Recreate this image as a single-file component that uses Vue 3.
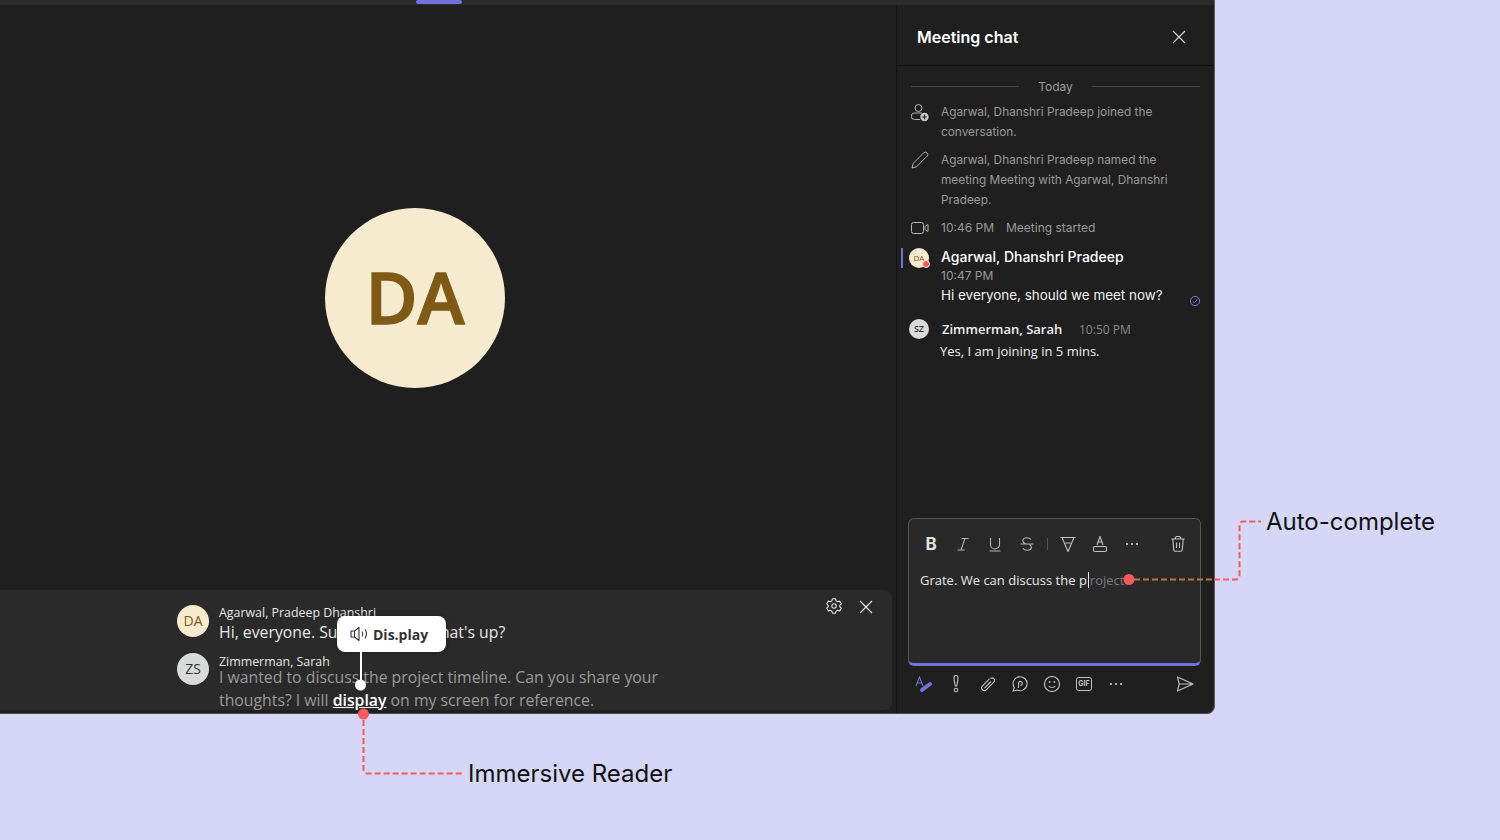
<script setup>
const systemRows = [
  { id: 'join', lines: 'Agarwal, Dhanshri Pradeep joined the conversation.' },
  { id: 'name', lines: 'Agarwal, Dhanshri Pradeep named the meeting Meeting with Agarwal, Dhanshri Pradeep.' },
]
</script>

<template>
  <div class="page">
    <div class="window">
      <div class="topbar"><span class="tab-mark"></span></div>
      <div class="body">
        <main class="stage">
          <div class="stage-center">
            <div class="big-avatar">DA</div>
          </div>
          <section class="captions">
            <div class="cap-list">
              <div class="cap-row">
                <div class="cap-avatar da">DA</div>
                <div class="cap-text">
                  <div class="cap-name">Agarwal, Pradeep Dhanshri</div>
                  <div class="cap-line bright">Hi, everyone. Sure, tell me... what's up?</div>
                </div>
              </div>
              <div class="cap-row second">
                <div class="cap-avatar zs">ZS</div>
                <div class="cap-text">
                  <div class="cap-name tight">Zimmerman, Sarah</div>
                  <div class="cap-line">I wanted to discuss the project timeline. Can you share your<br>thoughts? I will <span class="hot">display</span> on my screen for reference.</div>
                </div>
              </div>
            </div>
            <div class="cap-tools">
              <svg width="18" height="18" viewBox="0 0 20 20" fill="none" stroke="#e6e6e6" stroke-width="1.200" stroke-linejoin="round"><path d="M8.200 2h3.600l.5 2.300 1.700 1 2.300-.7 1.800 3-1.700 1.600v1.600l1.700 1.600-1.800 3-2.300-.7-1.700 1-.5 2.300H8.200l-.5-2.300-1.700-1-2.300.7-1.800-3 1.700-1.600V9.200L1.900 7.600l1.800-3 2.300.7 1.700-1z"/><circle cx="10" cy="10" r="2.500"/></svg>
              <svg width="20" height="20" viewBox="0 0 20 20" fill="none" stroke="#e6e6e6" stroke-width="1.200"><path d="M4 4l12 12M16 4L4 16"/></svg>
            </div>
          </section>
        </main>

        <aside class="chat">
          <header class="chat-head">
            <h1>Meeting chat</h1>
            <svg width="16" height="16" viewBox="0 0 16 16" fill="none" stroke="#d6d6d6" stroke-width="1.100"><path d="M2 2l12 12M14 2L2 14"/></svg>
          </header>

          <div class="chat-list">
            <div class="today"><span></span><b>Today</b><span></span></div>

            <div class="sys">
              <svg class="sys-icon" width="18" height="20" viewBox="0 0 18 20" fill="none" stroke="#b5b5b5" stroke-width="1"><circle cx="7.500" cy="6" r="3.500"/><path d="M11 11H3.500a3.250 3.250 0 0 0 0 6.500H9"/><circle cx="13.500" cy="15" r="4.200" fill="#c8c8c8" stroke="none"/><path d="M13.500 12.800v4.400M11.300 15h4.400" stroke="#1f1f1f" stroke-width="1.100"/></svg>
              <p>{{ systemRows[0].lines }}</p>
            </div>
            <div class="sys">
              <svg class="sys-icon" width="18" height="20" viewBox="0 0 18 20" fill="none" stroke="#b5b5b5" stroke-width="1" stroke-linejoin="round"><path d="M1 18l1.200-4.600L12.700 2.900a2.300 2.300 0 0 1 3.300 3.300L5.500 16.800z"/></svg>
              <p>{{ systemRows[1].lines }}</p>
            </div>
            <div class="sys">
              <svg class="sys-icon" width="18" height="20" viewBox="0 0 18 20" fill="none" stroke="#b5b5b5" stroke-width="1"><rect x="0.500" y="4.500" width="12" height="11" rx="2"/><path d="M14 8.500l3-2v7l-3-2z"/></svg>
              <p class="started"><span>10:46 PM</span><span>Meeting started</span></p>
            </div>

            <div class="msg first">
              <span class="bar"></span>
              <div class="mini-avatar da">DA<i></i></div>
              <div class="msg-main">
                <div class="msg-name">Agarwal, Dhanshri Pradeep</div>
                <div class="msg-time">10:47 PM</div>
                <div class="msg-text">Hi everyone, should we meet now?</div>
              </div>
              <svg class="sent" width="12" height="12" viewBox="0 0 12 12" fill="none" stroke="#7479de" stroke-width="1"><circle cx="6" cy="6" r="4.600"/><path d="M3.800 6.200l1.600 1.500 2.900-3"/></svg>
            </div>

            <div class="msg second">
              <div class="head-row">
                <div class="mini-avatar sz">SZ</div>
                <span class="sz-name">Zimmerman, Sarah</span>
                <span class="sz-time">10:50 PM</span>
              </div>
              <div class="sz-text">Yes, I am joining in 5 mins.</div>
            </div>
          </div>

          <div class="composer">
            <div class="toolbar">
              <span class="tool"><b class="fmt-b">B</b></span>
              <span class="tool"><svg width="16" height="16" viewBox="0 0 16 16" fill="none" stroke="#b5b5b5" stroke-width="1.100"><path d="M6.500 2.500h7M2.500 14h7M10 2.500L6 14"/></svg></span>
              <span class="tool"><svg width="16" height="16" viewBox="0 0 16 16" fill="none" stroke="#b5b5b5" stroke-width="1.100"><path d="M3.500 2v6.500a4.500 4.500 0 0 0 9 0V2M2.500 15h11"/></svg></span>
              <span class="tool"><svg width="16" height="16" viewBox="0 0 16 16" fill="none" stroke="#b5b5b5" stroke-width="1.100"><path d="M12 3.500C11 2 9 1.700 7.500 1.700 5.500 1.700 3.800 3 3.800 4.700c0 1.400 1 2.300 2.500 3M1.500 8h13M10.500 8.500c1.200.7 1.900 1.500 1.900 2.700 0 1.800-2 3-4.200 3-1.800 0-3.500-.6-4.400-2"/></svg></span>
              <span class="tool-sep"></span>
              <span class="tool"><svg width="16" height="16" viewBox="0 0 16 16" fill="none" stroke="#c2c2c2" stroke-width="1.100" stroke-linejoin="round"><path d="M.5 1.500h15M2 1.500L8 15.500l6-14M5.500 7h5"/></svg></span>
              <span class="tool"><svg width="16" height="18" viewBox="0 0 16 18" fill="none" stroke="#c2c2c2" stroke-width="1.100" stroke-linejoin="round"><path d="M5 10l3-8.500L11 10M6 7h4"/><rect x="1.500" y="11.500" width="13" height="5" rx="1.500"/></svg></span>
              <span class="tool"><svg width="14" height="4" viewBox="0 0 14 4" fill="#d0d0d0"><circle cx="2" cy="2" r="1.100"/><circle cx="7" cy="2" r="1.100"/><circle cx="12" cy="2" r="1.100"/></svg></span>
              <span class="tool trash"><svg width="16" height="18" viewBox="0 0 16 18" fill="none" stroke="#c2c2c2" stroke-width="1.100" stroke-linejoin="round"><path d="M1.500 4h13M5.500 4V2.500a1 1 0 0 1 1-1h3a1 1 0 0 1 1 1V4M2.800 4l.9 10.800a1.500 1.500 0 0 0 1.500 1.400h5.600a1.500 1.500 0 0 0 1.500-1.400L13.200 4M6.500 7.500v5.500M9.500 7.500v5.500"/></svg></span>
            </div>
            <div class="typed">Grate. We can discuss the p<span class="caret"></span><span class="ghost">roject</span></div>
          </div>

          <div class="actions">
            <span class="tool"><svg width="20" height="18" viewBox="0 0 20 18" fill="none"><path d="M2 11L5.500 2 9 11M3.300 8h4.400" stroke="#6f74d8" stroke-width="1.100"/><path d="M8 15l8-6" stroke="#6f74d8" stroke-width="4" stroke-linecap="round"/></svg></span>
            <span class="tool"><svg width="10" height="18" viewBox="0 0 10 18" fill="none" stroke="#c2c2c2" stroke-width="1.100"><path d="M3 2.500a2 2 0 0 1 4 0c0 3-.8 6-1.300 8.500H4.300C3.800 8.500 3 5.500 3 2.500z"/><circle cx="5" cy="15" r="1.800"/></svg></span>
            <span class="tool"><svg width="16" height="16" viewBox="0 0 16 16" fill="none" stroke="#c2c2c2" stroke-width="1.100"><path d="M10.500 2.500a2.500 2.500 0 0 1 3.500 3.500L6.500 13.700a2.700 2.700 0 0 1-4-3.900L9.500 2.800M11 5.500l-6.500 6.700"/></svg></span>
            <span class="tool"><svg width="16" height="16" viewBox="0 0 16 16" fill="none" stroke="#c2c2c2" stroke-width="1.100"><path d="M1.200 15l1-3.500A7 7 0 1 1 5 14z"/><path d="M6.500 12V6.800a2 2 0 1 1 1.800 2.600"/></svg></span>
            <span class="tool"><svg width="16" height="16" viewBox="0 0 16 16" fill="none" stroke="#c2c2c2" stroke-width="1.100"><circle cx="8" cy="8" r="7.500"/><path d="M4.800 10c1.500 2 4.900 2 6.400 0"/><circle cx="5.600" cy="6" r=".9" fill="#c2c2c2" stroke="none"/><circle cx="10.400" cy="6" r=".9" fill="#c2c2c2" stroke="none"/></svg></span>
            <span class="tool"><span class="gif">GIF</span></span>
            <span class="tool"><svg width="14" height="4" viewBox="0 0 14 4" fill="#d0d0d0"><circle cx="2" cy="2" r="1.100"/><circle cx="7" cy="2" r="1.100"/><circle cx="12" cy="2" r="1.100"/></svg></span>
            <span class="tool send"><svg width="18" height="16" viewBox="0 0 18 16" fill="none" stroke="#c2c2c2" stroke-width="1.100" stroke-linejoin="round"><path d="M1.500 1l15.500 7L1.500 15l1.700-7zM3.200 8H17"/></svg></span>
          </div>
        </aside>
      </div>
    </div>

    <div class="bubble">
      <svg width="20" height="16" viewBox="0 0 20 16" fill="none" stroke="#333" stroke-width="1.100" stroke-linejoin="round"><path d="M1 5h3.500L9 1.500v13L4.500 11H1zM4.500 5v6"/><path d="M12 5.500c1 1.500 1 3.500 0 5M15 3.500c1.800 2.700 1.800 6.300 0 9"/></svg>
      <span>Dis.play</span>
    </div>

    <svg class="overlay" width="1500" height="840" viewBox="0 0 1500 840" fill="none">
      <path d="M361 652V685" stroke="#fff" stroke-width="2"/>
      <circle cx="360.500" cy="685" r="5.500" fill="#fff"/>
      <path d="M363.500 720V770a3.500 3.500 0 0 0 3.500 3.500H462" stroke="#f25a5e" stroke-width="2" stroke-dasharray="6 3"/>
      <circle cx="363.500" cy="714" r="5.500" fill="#f25a5e"/>
      <path d="M1134 579.500H1214" stroke="#c8703e" stroke-width="2" stroke-dasharray="6 3"/>
      <path d="M1214 579.500H1236a3.500 3.500 0 0 0 3.500-3.500V525a3.500 3.500 0 0 1 3.500-3.500H1261" stroke="#f25a5e" stroke-width="2" stroke-dasharray="6 3"/>
      <circle cx="1129" cy="579.500" r="5.500" fill="#f25a5e"/>
    </svg>
    <div class="label auto">Auto-complete</div>
    <div class="label reader">Immersive Reader</div>
  </div>
</template>

<style>
html, body { margin: 0; overflow: hidden; }
</style>

<style scoped>
* { box-sizing: border-box; }
.page {
  position: relative;
  width: 1500px;
  height: 840px;
  background: #d6d7f6;
  font-family: "Inter", "Liberation Sans", sans-serif;
  overflow: hidden;
}
.window {
  width: 1215px;
  height: 714px;
  display: flex;
  flex-direction: column;
  background: #1f1f1f;
  border-right: 1px solid #5c5c5c;
  border-bottom: 1px solid #4a4a4a;
  border-bottom-right-radius: 8px;
  overflow: hidden;
}
.topbar {
  height: 5px;
  flex: none;
  background: #2b2b2b;
  padding-left: 416px;
}
.tab-mark {
  display: block;
  width: 46px;
  height: 4px;
  background: #6f74d8;
  border-radius: 2px;
}
.body { flex: 1; display: flex; min-height: 0; }
.stage {
  width: 896px;
  flex: none;
  display: flex;
  flex-direction: column;
  padding-bottom: 3px;
}
.stage-center {
  flex: 1;
  display: flex;
  align-items: center;
  justify-content: center;
  padding-right: 66px;
  padding-top: 1px;
}
.big-avatar {
  width: 180px;
  height: 180px;
  border-radius: 50%;
  background: #f6ebcf;
  color: #7f5a17;
  font-family: "Open Sans", sans-serif;
  font-weight: 600;
  font-size: 71px;
  line-height: 178px;
  text-align: center;
  -webkit-text-stroke: 1.500px #7f5a17;
}
.captions {
  width: 892px;
  height: 120px;
  flex: none;
  background: #2a2a2a;
  border-radius: 0 8px 8px 0;
  padding: 14px 16px 0 177px;
  display: flex;
  justify-content: space-between;
  font-family: "Open Sans", sans-serif;
}
.cap-row { display: flex; gap: 10px; }
.cap-row.second { margin-top: 8px; }
.cap-avatar {
  width: 32px;
  height: 32px;
  border-radius: 50%;
  font-size: 14px;
  line-height: 32px;
  text-align: center;
  flex: none;
  margin-top: 1px;
}
.da { background: #f6ebcf; color: #7f5a17; }
.zs { background: #d8dcd8; color: #333; }
.cap-name { font-size: 12.400px; line-height: 17px; color: #e6e6e6; }
.cap-name.tight { margin-top: 1px; margin-bottom: -4px; }
.cap-line { font-size: 15.800px; line-height: 23px; color: #9a9a9a; white-space: nowrap; }
.cap-line.bright { color: #e8e8e8; }
.hot { color: #fff; font-weight: 600; text-decoration: underline; }
.cap-tools { display: flex; gap: 13px; align-items: flex-start; margin-top: -7px; }

.chat {
  width: 318px;
  flex: none;
  display: flex;
  flex-direction: column;
  border-left: 1px solid #141414;
}
.chat-head {
  height: 61px;
  flex: none;
  display: flex;
  align-items: center;
  justify-content: space-between;
  padding: 3px 27px 0 20px;
  border-bottom: 1px solid #0f0f0f;
}
.chat-head h1 { margin: 0; font-size: 16px; font-weight: 600; color: #fff; }
.chat-list { flex: 1; padding: 12px 14px 0 13px; min-height: 0; }
.today { display: flex; align-items: center; height: 16px; margin-left: 1px; margin-bottom: 8px; }
.today span { flex: 1; height: 1px; background: #4a4a4a; }
.today b { width: 73px; text-align: center; font-weight: 400; font-size: 12px; color: #9a9a9a; }
.sys { display: flex; gap: 12px; margin-bottom: 8px; margin-left: 1px; }
.sys-icon { flex: none; }
.sys p { margin: 0; font-size: 11.850px; line-height: 20px; color: #9a9a9a; width: 240px; }
.sys p.started { display: flex; gap: 12px; font-size: 12px; }
.msg { position: relative; }
.msg.first { display: flex; margin: 10px 0 0 -9px; }
.bar { width: 2px; height: 20px; background: #6f74d8; margin-right: 6px; flex: none; }
.mini-avatar {
  position: relative;
  width: 20px;
  height: 20px;
  border-radius: 50%;
  flex: none;
  font-size: 8px;
  line-height: 20px;
  text-align: center;
  font-family: "Open Sans", sans-serif;
}
.mini-avatar i {
  position: absolute;
  right: -1px;
  bottom: 0;
  width: 8px;
  height: 8px;
  border-radius: 50%;
  background: #f25a5e;
  border: 1px solid #f6ebcf;
}
.sz { background: #d8dcd8; color: #333; font-weight: 600; font-size: 9px; }
.msg-main { margin-left: 12px; }
.msg-name { font-size: 14px; font-weight: 500; line-height: 18px; color: #fff; }
.msg-time { font-size: 12px; line-height: 19px; color: #9a9a9a; }
.msg-text { font-size: 13.450px; line-height: 21px; color: #f0f0f0; }
.sent { position: absolute; right: -1px; top: 47px; }
.msg.second { margin: 13px 0 0 -1px; font-family: "Open Sans", sans-serif; }
.head-row { display: flex; align-items: center; height: 20px; }
.sz-name { margin-left: 13px; font-size: 13px; font-weight: 600; color: #f0f0f0; width: 137px; }
.sz-time { font-size: 12px; color: #8a8a8a; }
.sz-text { margin: 2px 0 0 31px; font-size: 13px; line-height: 20px; color: #f0f0f0; }

.composer {
  flex: none;
  height: 148px;
  width: 293px;
  margin-left: 11px;
  background: #292929;
  border: 1px solid #565656;
  border-bottom: 3px solid #6f74d8;
  border-radius: 6px;
}
.toolbar { display: flex; align-items: center; height: 50px; padding: 0 6px; }
.tool { width: 32px; height: 24px; flex: none; display: flex; align-items: center; justify-content: center; }
.tool-sep { width: 1px; height: 12px; background: #555; margin: 0 4px; flex: none; }
.fmt-b { font-size: 17px; font-weight: 700; color: #e0e0e0; }
.trash { margin-left: auto; }
.typed {
  margin: 1px 0 0 11px;
  font-family: "Open Sans", sans-serif;
  font-size: 13px;
  line-height: 20px;
  color: #e8e8e8;
  display: flex;
  align-items: center;
  white-space: pre;
}
.caret { width: 1px; height: 16px; background: #e8e8e8; margin: 0 1px; }
.ghost { color: #7c7c7c; }
.actions { display: flex; align-items: center; height: 36px; margin-left: 11px; width: 293px; flex: none; margin-bottom: 11px; }
.send { margin-left: auto; }
.gif {
  width: 16px;
  height: 14px;
  border: 1px solid #c2c2c2;
  border-radius: 2.500px;
  font-size: 7px;
  font-weight: 700;
  line-height: 12px;
  text-align: center;
  color: #c2c2c2;
}

.bubble {
  position: absolute;
  left: 337px;
  top: 616px;
  width: 109px;
  height: 36px;
  background: #fff;
  border-radius: 8px;
  display: flex;
  align-items: center;
  gap: 3px;
  padding-left: 13px;
  font-family: "Open Sans", sans-serif;
  font-weight: 700;
  font-size: 14px;
  color: #333;
  box-shadow: 0 0 4px rgba(0, 0, 0, .3);
}
.overlay { position: absolute; left: 0; top: 0; pointer-events: none; }
.label {
  position: absolute;
  font-size: 24px;
  line-height: 30px;
  color: #111;
  white-space: nowrap;
}
.auto { left: 1266px; top: 507px; }
.reader { left: 468px; top: 759px; }
</style>
